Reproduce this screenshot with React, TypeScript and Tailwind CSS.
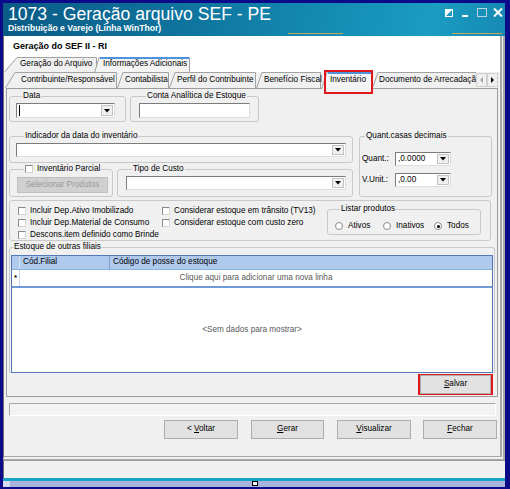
import React from 'react';

const Tri = () => (
  <svg width="6" height="4" viewBox="0 0 6 4">
    <path d="M0 0h6L3 3.5z" fill="#000" />
  </svg>
);

function Combo({ wc, hc, value, caret }: { wc: string; hc: string; value?: string; caret?: boolean }) {
  return (
    <div className={`${wc} ${hc} flex bg-white border border-[#7c7c7c] border-b-[#dedede] border-r-[#dedede]`}>
      <div className="flex-1 flex items-center pl-[2px] leading-none">
        {caret && <span className="w-px h-[11px] bg-black" />}
        {value}
      </div>
      <div className="w-[12px] my-[1px] mr-[1px] flex items-center justify-center bg-[#f0f0f0] border border-[#c3c3c3]">
        <Tri />
      </div>
    </div>
  );
}

function Check() {
  return <span className="w-[8px] h-[8px] shrink-0 bg-white border border-[#8a8a8a] border-b-[#d6d6d6] border-r-[#d6d6d6]" />;
}

function Radio({ on }: { on?: boolean }) {
  return (
    <span className="w-[8px] h-[8px] shrink-0 rounded-full bg-white border border-[#8a8a8a] flex items-center justify-center">
      {on && <span className="w-[3px] h-[3px] rounded-full bg-black" />}
    </span>
  );
}

function Btn({ wc, children }: { wc: string; children: React.ReactNode }) {
  return (
    <div className={`${wc} h-[19px] shrink-0 flex items-center justify-center bg-[#e1e1e1] border border-[#adadad]`}>
      {children}
    </div>
  );
}

type TabProps = { label: string; w: number; wc: string; h: number; s: number; pl: string; selected?: boolean; children?: React.ReactNode; ml?: string };

function Tab({ label, w, wc, h, s, pl, selected, children, ml = '' }: TabProps) {
  return (
    <div className={`relative shrink-0 ${wc} ${ml} h-full flex items-center ${pl} ${selected ? 'z-10' : ''}`}>
      <svg className="absolute left-0 top-0 overflow-visible" width={w} height={h}>
        <path
          d={`M0.5 ${selected ? h + 1 : h} L${s} 0.5 L${w - 0.5} 0.5 L${w - 0.5} ${selected ? h + 1 : h}`}
          fill={selected ? '#f4f4f4' : '#f0f0f0'}
          stroke="#a2a2a2"
        />
        {selected && <line x1={s + 1} y1={1} x2={w - 1} y2={1} stroke="#4f92dc" strokeWidth={2} />}
      </svg>
      <span className="relative whitespace-nowrap leading-none">{label}</span>
      {children}
    </div>
  );
}

export default function App() {
  return (
    <div className="w-[510px] h-[489px] overflow-hidden bg-[#0b0a88] pt-[3px] pl-[3px] pr-[5px] flex flex-col font-['Liberation_Sans',Arial,sans-serif] text-[8.2px] text-black">
      {/* title bar */}
      <div className="relative h-[33px] shrink-0 flex bg-[linear-gradient(100deg,#0a5b86_0%,#0f77a0_40%,#1690b8_70%,#1b9cc2_85%,#1689b3_100%)]">
        <div className="pl-[5px] pt-[2px] flex flex-col text-white">
          <div className="text-[17.6px] leading-[19px]">1073 - Geração arquivo SEF - PE</div>
          <div className="text-[8.6px] leading-[10px] font-bold mt-[-1px]">Distribuição e Varejo (Linha WinThor)</div>
        </div>
        <div className="ml-auto flex items-start pt-[5px] pr-[2px]">
          <svg width="8" height="8" viewBox="0 0 8 8" className="mt-[1px]">
            <rect x="0.5" y="0.5" width="7" height="7" fill="none" stroke="#fff" />
            <path d="M1 7V1h6z" fill="#fff" />
          </svg>
          <svg width="8" height="9" viewBox="0 0 8 9" className="ml-[9px]">
            <rect x="0" y="7" width="6" height="2" fill="#fff" />
          </svg>
          <svg width="10" height="9" viewBox="0 0 10 9" className="ml-[7px]">
            <rect x="0.5" y="0.5" width="9" height="8" fill="none" stroke="#b9d3e0" />
          </svg>
          <svg width="10" height="9" viewBox="0 0 10 9" className="ml-[6px]">
            <path d="M1 0.5L9 8.5M9 0.5L1 8.5" stroke="#fff" strokeWidth="2" />
          </svg>
        </div>
        <div className="absolute bottom-[2px] left-[285px] w-[55px] h-[1px] bg-[#c9a750]" />
        <div className="absolute bottom-[2px] left-[449px] w-[50px] h-[1px] bg-[#c9a750]" />
      </div>

      {/* form */}
      <div className="h-[424px] shrink-0 flex flex-col bg-[#f0f0f0] border-l border-l-[#6d6d6d] border-r-[5px] border-r-[#a7a7a7] border-b-[4px] border-b-[#a7a7a7] border-double">
        <div className="h-[21px] shrink-0 bg-white flex items-center pl-[9px] text-[9px] font-bold">Geração do SEF II - RI</div>

        <div className="h-[15px] shrink-0 bg-white flex">
          <Tab label="Geração do Arquivo" w={93} wc="w-[93px]" h={15} s={13} pl="pl-[16px]" />
          <Tab label="Informações Adicionais" w={96} wc="w-[96px]" h={15} s={5} pl="pl-[9px]" ml="-ml-[3px]" selected />
        </div>

        <div className="h-[16px] shrink-0 flex pl-[1px] relative z-10">
          <Tab label="Contribuinte/Responsável" w={112} wc="w-[112px]" h={16} s={10} pl="pl-[16px]" />
          <Tab label="Contabilista" w={52} wc="w-[52px]" h={16} s={6} pl="pl-[8px]" />
          <Tab label="Perfil do Contribuinte" w={87} wc="w-[87px]" h={16} s={6} pl="pl-[8px]" />
          <Tab label="Benefício Fiscal" w={65} wc="w-[65px]" h={16} s={6} pl="pl-[8px]" />
          <Tab label="Inventário" w={51} wc="w-[51px]" h={16} s={6} pl="pl-[9px]" selected>
            <div className="absolute left-[3px] top-[-2px] w-[49px] h-[24px] border-2 border-[#e2161d]" />
          </Tab>
          <div className="relative w-[104px] shrink-0 h-full overflow-hidden flex items-center pl-[7px]">
            <svg className="absolute left-0 top-0" width="110" height="16">
              <path d="M0.5 16 L6 0.5 L110 0.5" fill="#f0f0f0" stroke="#a2a2a2" />
            </svg>
            <span className="relative whitespace-nowrap leading-none">Documento de Arrecadaçã</span>
          </div>
          <div className="w-[11px] h-[14px] mt-[1px] flex items-center justify-center bg-[#f0f0f0] border border-[#d0d0d0]">
            <svg width="3" height="6" viewBox="0 0 3 6"><path d="M3 0v6L0 3z" fill="#a8a8a8" /></svg>
          </div>
          <div className="w-[11px] h-[14px] mt-[1px] flex items-center justify-center bg-[#f0f0f0] border border-[#d0d0d0]">
            <svg width="3" height="6" viewBox="0 0 3 6"><path d="M0 0v6l3-3z" fill="#000" /></svg>
          </div>
        </div>

        {/* tab panel */}
        <div className="ml-[2px] w-[492px] h-[309px] shrink-0 border border-[#9b9b9b] bg-[#f0f0f0] flex flex-col">
          {/* row A */}
          <div className="flex mt-[2px]">
            <fieldset className="ml-[2px] w-[117px] h-[31px] border border-[#c9c9c9] rounded-[3px] pl-[6px]">
              <legend className="ml-[6px] px-[1px] leading-[10px]">Data</legend>
              <div className="mt-[2px]">
                <Combo wc="w-[99px]" hc="h-[15px]" caret />
              </div>
            </fieldset>
            <fieldset className="ml-[4px] w-[129px] h-[31px] border border-[#c9c9c9] rounded-[3px] pl-[8px]">
              <legend className="ml-[7px] px-[1px] leading-[10px]">Conta Analítica de Estoque</legend>
              <div className="mt-[2px] w-[111px] h-[15px] bg-white border border-[#7c7c7c] border-b-[#dedede] border-r-[#dedede]" />
            </fieldset>
          </div>

          {/* row B/C */}
          <div className="flex mt-[9px]">
            <div className="ml-[2px] w-[344px] flex flex-col">
              <fieldset className="h-[32px] border border-[#c9c9c9] rounded-[3px] pl-[6px]">
                <legend className="ml-[8px] px-[1px] leading-[10px]">Indicador da data do inventário</legend>
                <div className="mt-[2px]">
                  <Combo wc="w-[330px]" hc="h-[14px]" />
                </div>
              </fieldset>
              <div className="flex mt-[1px]">
                <fieldset className="w-[104px] h-[33px] border border-[#c9c9c9] rounded-[3px] pl-[7px]">
                  <legend className="ml-[7px] px-[1px] leading-[10px]">
                    <span className="flex items-center gap-[4px]">
                      <Check />
                      Inventário Parcial
                    </span>
                  </legend>
                  <div className="mt-[3px] w-[91px] h-[16px] flex items-center justify-center bg-[#d0d0d0] border border-[#bfbfbf] text-[#9a9a9a]">
                    Selecionar Produtos
                  </div>
                </fieldset>
                <fieldset className="ml-[4px] w-[236px] h-[33px] border border-[#c9c9c9] rounded-[3px] pl-[8px]">
                  <legend className="ml-[6px] px-[1px] leading-[10px]">Tipo de Custo</legend>
                  <div className="mt-[2px]">
                    <Combo wc="w-[220px]" hc="h-[14px]" />
                  </div>
                </fieldset>
              </div>
            </div>
            <fieldset className="ml-[6px] w-[133px] h-[66px] border border-[#c9c9c9] rounded-[3px] pl-[2px]">
              <legend className="ml-[3px] px-[1px] leading-[10px]">Quant.casas decimais</legend>
              <div className="flex items-center mt-[11px]">
                <span className="w-[33px]">Quant.:</span>
                <Combo wc="w-[56px]" hc="h-[14px]" value=",0.0000" />
              </div>
              <div className="flex items-center mt-[7px]">
                <span className="w-[33px]">V.Unit.:</span>
                <Combo wc="w-[56px]" hc="h-[14px]" value=",0.00" />
              </div>
            </fieldset>
          </div>

          {/* row D */}
          <div className="ml-[2px] mt-[3px] w-[482px] h-[41px] border border-[#c9c9c9] rounded-[3px] flex">
            <div className="w-[152px] pl-[8px] pt-[4px] flex flex-col">
              <div className="h-[12px] flex items-center gap-[4px]"><Check />Incluir Dep.Ativo Imobilizado</div>
              <div className="h-[12px] flex items-center gap-[4px]"><Check />Incluir Dep.Material de Consumo</div>
              <div className="h-[12px] flex items-center gap-[4px]"><Check />Descons.item definido como Brinde</div>
            </div>
            <div className="w-[165px] pt-[4px] flex flex-col">
              <div className="h-[12px] flex items-center gap-[4px]"><Check />Considerar estoque em trânsito (TV13)</div>
              <div className="h-[12px] flex items-center gap-[4px]"><Check />Considerar estoque com custo zero</div>
            </div>
            <fieldset className="mt-[3px] w-[154px] h-[31px] border border-[#c9c9c9] rounded-[3px] pl-[7px]">
              <legend className="ml-[5px] px-[1px] leading-[10px]">Listar produtos</legend>
              <div className="flex items-center h-[12px] mt-[6px]">
                <div className="w-[48px] flex items-center gap-[5px]"><Radio />Ativos</div>
                <div className="w-[51px] flex items-center gap-[5px]"><Radio />Inativos</div>
                <div className="flex items-center gap-[5px]"><Radio on />Todos</div>
              </div>
            </fieldset>
          </div>

          {/* row E */}
          <fieldset className="ml-[2px] mt-[1px] w-[486px] border border-b-0 border-[#c9c9c9] rounded-t-[3px] pl-[1px]">
            <legend className="ml-[2px] px-[1px] leading-[10px]">Estoque de outras filiais</legend>
            <div className="mt-[3px] w-[482px] h-[118px] border border-[#5577bb] bg-white flex flex-col">
              <div className="h-[14px] shrink-0 flex bg-[#b0caee] border-b border-[#8fb0e2]">
                <div className="w-[8px] border-r border-[#d2e1f6]" />
                <div className="w-[90px] pl-[3px] flex items-center border-r border-[#7f9fd4]">Cód.Filial</div>
                <div className="flex-1 pl-[3px] flex items-center">Código de posse do estoque</div>
              </div>
              <div className="h-[18px] shrink-0 flex bg-white border-b-2 border-[#7099d8]">
                <div className="w-[8px] flex items-center justify-center border-r border-[#c7d7ef] text-[8px] font-bold">*</div>
                <div className="flex-1 flex items-center justify-center text-[#5a5a5a]">Clique aqui para adicionar uma nova linha</div>
              </div>
              <div className="flex-1 flex items-center justify-center text-[#5a5a5a]">&lt;Sem dados para mostrar&gt;</div>
            </div>
          </fieldset>

          <div className="flex justify-end mt-[1px] mr-[4px]">
            <div className="w-[75px] h-[21px] border-2 border-[#e2161d] flex items-center justify-center">
              <Btn wc="w-[71px] h-[17px]">
                <span><span className="underline">S</span>alvar</span>
              </Btn>
            </div>
          </div>
        </div>

        {/* progress */}
        <div className="ml-[5px] mt-[6px] w-[487px] h-[13px] shrink-0 bg-[#f3f3f3] border border-[#a7a7a7] border-b-white border-r-white" />

        {/* buttons */}
        <div className="flex mt-[4px] pl-[160px]">
          <Btn wc="w-[74px]"><span>&lt; <span className="underline">V</span>oltar</span></Btn>
          <Btn wc="w-[73px] ml-[13px]"><span><span className="underline">G</span>erar</span></Btn>
          <Btn wc="w-[74px] ml-[13px]"><span><span className="underline">V</span>isualizar</span></Btn>
          <Btn wc="w-[74px] ml-[12px]"><span><span className="underline">F</span>echar</span></Btn>
        </div>
      </div>

      {/* status bar */}
      <div className="h-[18px] shrink-0 bg-[#f0f0f0] border-t border-[#9d9d9d] border-l border-l-[#6d6d6d]" />
      <div className="h-[3px] shrink-0 bg-[#19a4c5]" />
      <div className="h-[6px] shrink-0 flex bg-[#a9b3db]">
        <div className="w-[7px] bg-[#d5daee]" />
        <div className="ml-[242px] w-[6px] h-[5px] bg-white border border-black" />
      </div>
    </div>
  );
}
